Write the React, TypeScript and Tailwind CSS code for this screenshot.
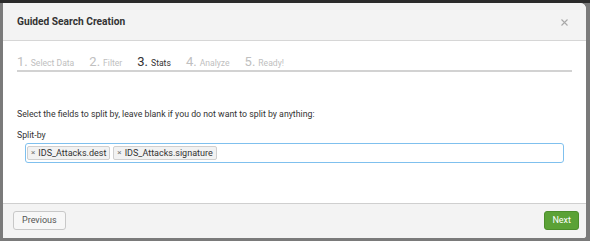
import React from "react";

const font = { fontFamily: "Roboto, 'Liberation Sans', sans-serif" };

function Step({ n, label, active }: { n: string; label: string; active?: boolean }) {
  return (
    <div className={`flex items-baseline ${active ? "text-[#333]" : "text-[#c0c0c0]"}`}>
      <span className="text-[13px] leading-none">{n}.</span>
      <span className="text-[8.6px] leading-none ml-[3px]">{label}</span>
    </div>
  );
}

function Token({ label }: { label: string }) {
  return (
    <div className="flex items-center h-[14px] px-[3px] bg-[#f2f2f2] border border-[#cfcfcf] rounded-[2px] text-[9px] text-[#333] leading-none">
      <span className="text-[8px] text-[#777] mr-[3px]">×</span>
      <span>{label}</span>
    </div>
  );
}

export default function App() {
  return (
    <div
      className="w-[590px] h-[241px] bg-[#7a7a7a] border-t-[3px] border-[#2b2b2b] pl-[3px] pr-[4px] pb-[3px] flex"
      style={font}
    >
      <div className="flex-1 flex flex-col bg-white rounded-tr-[6px] rounded-br-[3px] overflow-hidden">
        <div className="h-[38px] shrink-0 bg-[#f3f3f3] border-b border-[#d6d6d6] flex items-center justify-between pl-[14px] pr-[18px]">
          <span className="text-[10.2px] font-bold text-[#333]">Guided Search Creation</span>
          <svg width="7" height="7" viewBox="0 0 7 7" className="mt-[1px]">
            <path d="M0.5 0.5 L6.5 6.5 M6.5 0.5 L0.5 6.5" stroke="#a8a8a8" strokeWidth="1.1" />
          </svg>
        </div>
        <div className="flex-1 px-[14px] pt-[14px]">
          <div className="flex items-baseline gap-[15px] pb-[2px] border-b-2 border-[#d2d2d2]">
            <Step n="1" label="Select Data" />
            <Step n="2" label="Filter" />
            <Step n="3" label="Stats" active />
            <Step n="4" label="Analyze" />
            <Step n="5" label="Ready!" />
          </div>
          <div className="mt-[36px] text-[8.75px] text-[#333] leading-[12px]">
            Select the fields to split by, leave blank if you do not want to split by anything:
          </div>
          <div className="mt-[9px] text-[8.75px] text-[#333] leading-[12px]">Split-by</div>
          <div className="mt-[2px] mx-[8px] h-[20px] border border-[#7fc0ee] rounded-[3px] flex items-center gap-[3px] px-[1px]">
            <Token label="IDS_Attacks.dest" />
            <Token label="IDS_Attacks.signature" />
          </div>
        </div>
        <div className="h-[35px] shrink-0 bg-[#f3f3f3] border-t border-[#cfcfcf] flex items-start justify-between pl-[10px] pr-[7px] pt-[7px]">
          <button className="h-[19px] px-[8px] bg-[#f7f7f7] border border-[#c8c8c8] rounded-[3px] text-[9px] text-[#555]">
            Previous
          </button>
          <button className="h-[19px] px-[7px] bg-[#5ba236] border border-[#4c8e2b] rounded-[3px] text-[9px] text-white">
            Next
          </button>
        </div>
      </div>
    </div>
  );
}
